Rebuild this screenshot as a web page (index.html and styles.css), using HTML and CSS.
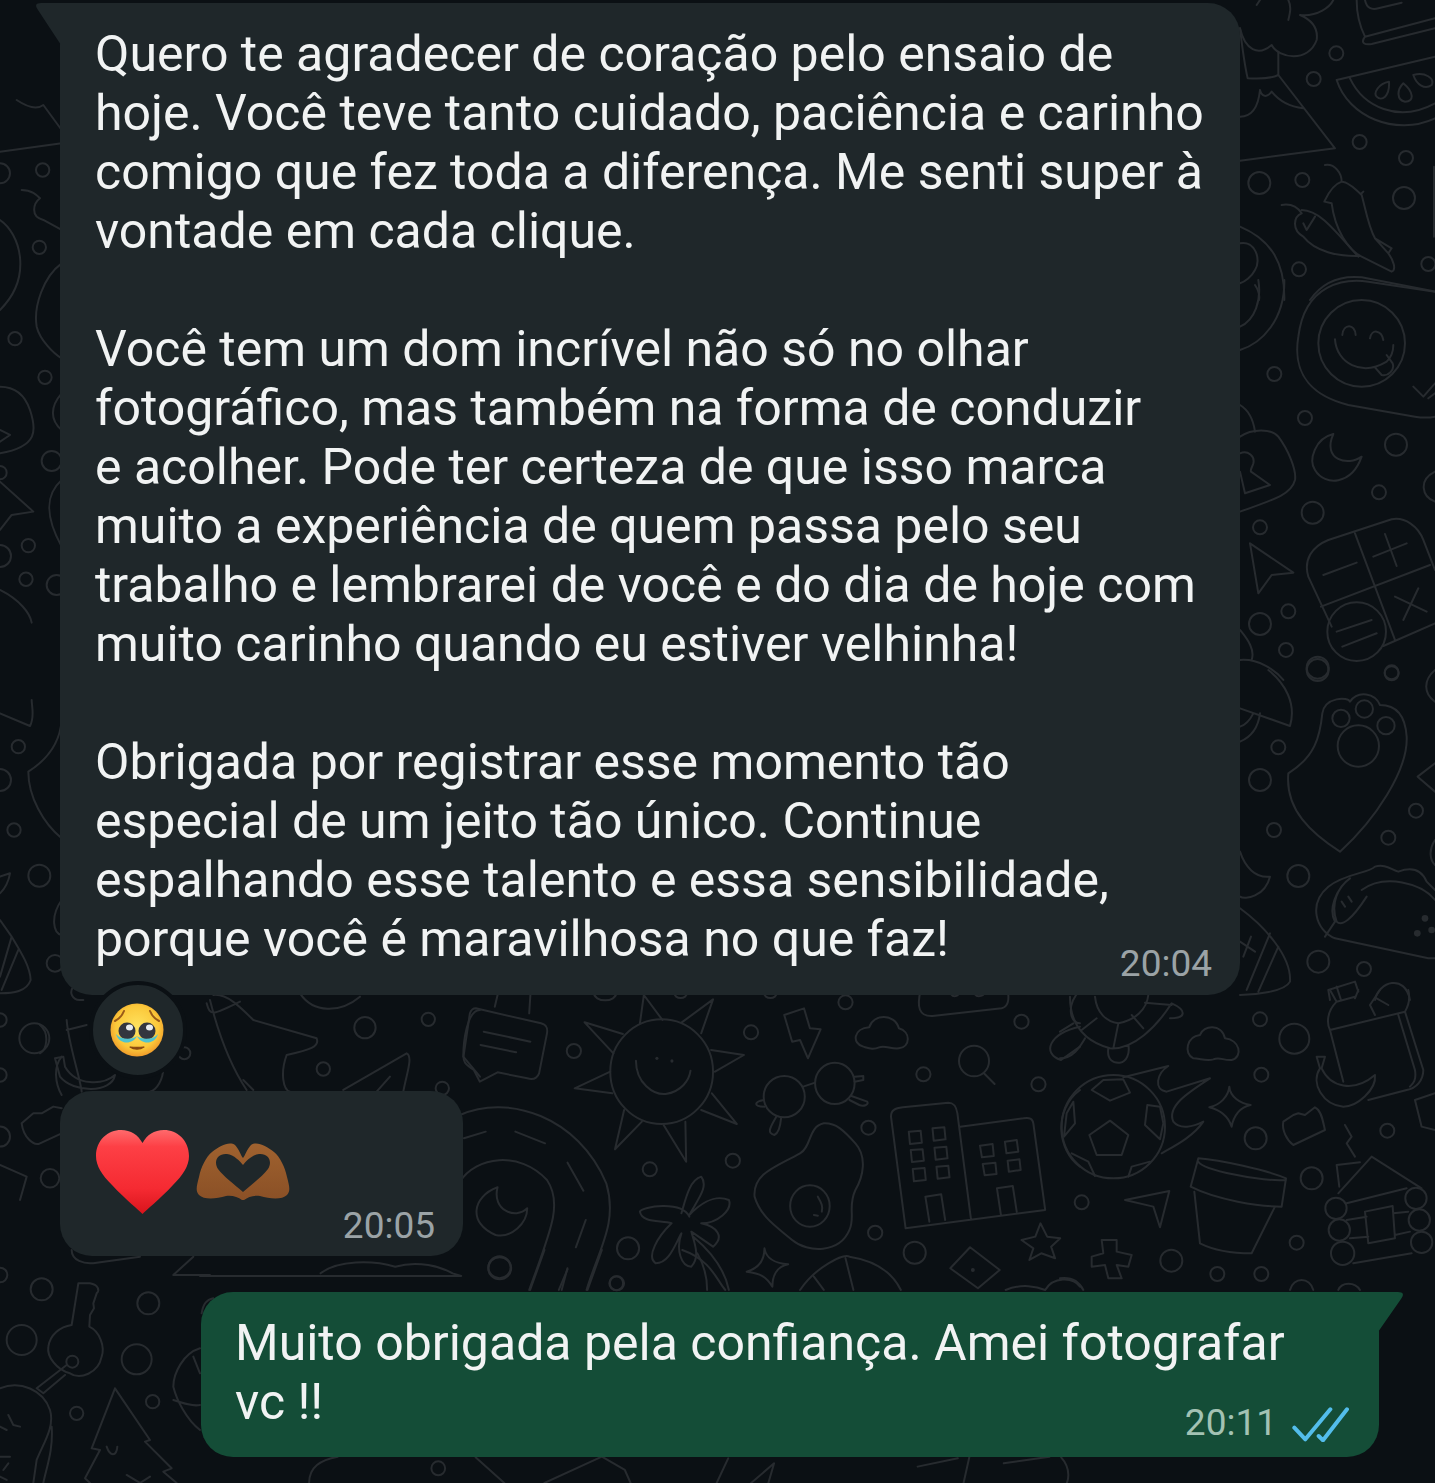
FILE: index.html
```html
<!DOCTYPE html>
<html lang="pt-BR">
<head>
  <meta charset="UTF-8" />
  <meta name="viewport" content="width=device-width, initial-scale=1" />
  <title>Conversa</title>
  <link rel="stylesheet" href="styles.css">
</head>
<body>

<!-- wallpaper doodles, each group is traced in its own scaled coordinates -->
<svg class="wallpaper" width="1435" height="1483" viewBox="0 0 1435 1483" aria-hidden="true">
  <!-- right column, top -->
  <g transform="translate(1235 0) scale(.3333)">
    <path d="M15 85C30 150 70 170 110 135C130 175 220 190 245 120C250 85 230 60 195 45C250 50 285 20 295 0"/>
    <path d="M130 155V225C100 240 60 235 38 235C30 200 25 170 15 85M160 0C170 20 165 40 160 60M65 15L75 0"/>
    <path d="M130 225L300 445L15 482M75 270C80 290 95 295 110 275C130 300 160 320 205 325M75 270C70 320 50 350 15 350"/>
    <path d="M365 0C365 40 375 80 390 110L600 55M390 110C375 130 390 135 410 132L600 85M390 0C395 25 410 30 430 25L500 8"/>
    <path d="M305 240L600 170M305 240C340 350 480 410 600 355M345 235C385 320 490 370 600 310"/>
    <path d="M462 245C430 250 415 280 425 290C440 305 465 290 462 245ZM505 250C485 270 485 300 510 305C540 305 535 275 505 250ZM535 225C545 255 570 270 590 255C600 235 570 215 535 225Z"/>
    <path d="M270 495C300 490 320 520 320 545C290 555 275 590 268 605L290 610C300 690 340 750 380 770L470 815C485 810 475 780 460 760L420 715C400 680 390 620 380 585C345 550 330 545 320 545M380 580L385 575M420 715L470 745L460 760"/>
    <path d="M140 615C170 610 190 625 200 640C175 650 170 690 205 710C240 755 310 770 375 768M200 630C250 630 290 680 370 770M205 670L215 690L240 650"/>
    <path d="M15 680C110 720 150 790 148 900M15 730C60 720 80 780 60 810C50 830 30 845 15 850M60 855C70 870 75 885 72 900M225 900C260 850 310 825 380 832L600 875M597 500V710"/>
    <circle cx="304" cy="160" r="21"/><circle cx="236" cy="237" r="21"/><circle cx="374" cy="426" r="21"/><circle cx="513" cy="474" r="21"/><circle cx="202" cy="540" r="21"/><circle cx="192" cy="808" r="21"/><circle cx="580" cy="792" r="21"/><circle cx="73" cy="549" r="33"/><circle cx="507" cy="594" r="33"/>
  </g>
  <!-- right column, smile, lock, calculator -->
  <g transform="translate(1235 280) scale(.3333)">
    <path d="M600 35L400 5C330-5 210 10 190 170C170 290 240 350 340 375L540 410C570 415 590 412 600 410"/>
    <circle cx="380" cy="190" r="130"/>
    <path d="M300 178C305 250 380 290 455 245C470 230 475 210 475 195M322 165C325 130 360 130 362 165M405 175C410 145 440 150 445 180M420 262L440 285C460 290 480 270 473 250L455 225M535 320L565 350L600 310M580 355L600 340"/>
    <path d="M15 375C40 390 55 420 60 455M15 470C50 445 110 445 130 470C160 510 185 570 180 600C170 640 130 655 15 695M15 520C40 510 60 530 55 550C50 565 45 570 48 575L105 615L30 640L15 575"/>
    <path d="M295 462C240 475 220 540 240 570C270 620 350 615 380 530C340 560 260 540 295 462Z"/>
    <path d="M45 790L175 878L110 885L70 940Z"/>
    <path d="M280 780L470 718C510 710 550 740 565 780L600 870M280 780C230 800 205 840 220 890L290 1040M360 760L480 1080M258 980L585 855M265 885L365 848M415 830L515 790M450 762L485 858M480 950L575 995M550 925L505 1020M305 1055L410 1020M322 1100L425 1060M445 1098L600 1030"/>
    <circle cx="365" cy="1055" r="88"/>
    <path d="M15 210C80 190 150 120 148 0M15 140C60 120 80 60 70 0M15 1050C40 1080 60 1110 50 1140M15 1140C70 1135 120 1170 145 1200M600 575C550 600 560 650 600 665"/>
    <circle cx="118" cy="282" r="21"/><circle cx="210" cy="414" r="21"/><circle cx="432" cy="637" r="21"/><circle cx="75" cy="742" r="21"/><circle cx="160" cy="994" r="21"/><circle cx="153" cy="1110" r="21"/><circle cx="470" cy="1177" r="21"/><circle cx="483" cy="494" r="33"/><circle cx="233" cy="698" r="33"/><circle cx="75" cy="1032" r="33"/><circle cx="248" cy="1163" r="33"/>
  </g>
  <!-- right column, paw and taco -->
  <g transform="translate(1235 670) scale(.3333)">
    <path d="M15 115L165 168C185 100 150 40 100 0M15 215C50 200 70 170 75 130M15 170C30 165 45 150 55 130"/>
    <path d="M160 310C240 260 255 200 262 130C270 80 340 80 345 95C370 60 420 70 435 105C470 105 510 120 515 200C520 300 420 450 315 545C230 490 150 420 160 310Z"/>
    <circle cx="318" cy="145" r="26"/><circle cx="388" cy="117" r="26"/><circle cx="453" cy="167" r="26"/><circle cx="370" cy="228" r="62"/>
    <path d="M600 280L548 320L600 365M15 545C30 590 60 625 105 620C90 680 30 690 15 680"/>
    <path d="M15 715C90 770 170 860 165 935C150 965 60 975 15 975M105 790L35 960M130 830L70 965M15 815L60 845M25 860L48 800"/>
    <path d="M300 805C240 780 220 700 280 650C330 610 400 610 420 590C450 580 470 600 490 605C530 590 560 600 575 635L600 660M300 805L580 865H600M345 625C300 660 280 720 300 755L270 800M395 680C350 750 320 770 305 755C285 700 310 650 345 625M380 660C450 610 560 640 600 690M320 695L330 710M340 680L350 695"/>
    <circle class="dot" cx="570" cy="745" r="10"/><circle class="dot" cx="547" cy="790" r="10"/><circle class="dot" cx="590" cy="780" r="10"/>
    <path d="M285 990L280 960L360 935L370 965M305 950L318 990M420 990C430 935 510 910 525 990M600 510C580 540 585 570 600 585M600 0C565 30 565 70 600 95"/>
    <circle cx="130" cy="232" r="21"/><circle cx="117" cy="480" r="21"/><circle cx="543" cy="422" r="21"/><circle cx="460" cy="503" r="21"/><circle cx="387" cy="897" r="21"/><circle cx="75" cy="330" r="33"/><circle cx="190" cy="618" r="33"/><circle cx="250" cy="875" r="33"/><circle cx="248" cy="0" r="33"/><circle cx="470" cy="10" r="21"/>
  </g>
  <!-- below the long message, right side -->
  <g transform="translate(1060 990) scale(.3333)">
    <path d="M30 20C30 90 60 150 150 175C220 180 290 110 335 40C380 60 380 85 330 85M105 20C110 70 140 95 175 100C225 90 260 60 265 15M175 100L160 175M215 75L250 115M255 38L335 45M65 120L110 85M0 125L40 100M0 205C40 205 60 170 75 145M145 175C140 210 160 220 180 218C200 215 210 190 205 165"/>
    <path d="M400 205C370 190 380 140 420 135C430 105 485 100 495 145C540 150 550 200 515 210C490 212 480 200 460 208C440 215 420 205 400 205Z"/>
    <circle cx="160" cy="410" r="155"/>
    <path d="M150 392L205 435L185 495L110 495L88 435ZM95 300L130 270L190 268L210 308L150 332ZM262 345L300 350L310 400L300 448L255 405ZM40 335L20 370L12 440L45 400ZM35 490L85 515L105 558M205 560L215 530L270 515"/>
    <path d="M190 262L325 228C290 250 280 300 320 305L450 265C380 310 320 350 340 395C360 420 400 410 430 395C400 440 340 470 305 490"/>
    <path d="M508 290C510 320 540 340 572 345C540 350 520 380 515 410C505 380 480 360 448 352C480 345 505 320 508 290Z"/>
    <path d="M415 505C480 510 620 540 678 565L665 650C600 650 470 630 392 590ZM415 515C430 540 600 575 678 570M403 605L420 760C470 785 530 790 575 790L645 650"/>
    <path d="M195 630L328 603L300 712L280 650Z"/>
    <path d="M125 750H170V785L215 795L205 830L170 825L185 865H145L135 825L95 830V800L130 790Z"/>
    <path d="M810 120L1035 65L1090 240C1090 270 1070 295 1040 300L925 330M810 120C800 100 800 65 830 35L810 0M1035 65C1050 40 1050 20 1045 0M810 120L850 275M1015 75L1065 240C1070 270 1060 280 1050 290M885 25L895 0M830 35L885 20M945 75L930 45L960 0M950 25L985 45"/>
    <path d="M770 200H795L785 235C810 290 880 310 945 255C950 300 890 350 850 350C790 345 750 280 780 235Z"/>
    <path d="M670 395L700 375L715 370L735 375L765 352C785 360 790 400 795 420L700 465C680 450 665 420 670 395Z"/>
    <path d="M855 405L875 440L860 460L885 500M835 610L935 500L1085 595M830 525L900 517M830 525L838 590M860 640L1040 595M860 690L920 680M1000 670L1045 665M870 745L925 740M1005 735L1050 725M880 820L1055 790M915 665L998 648L1005 745L925 760Z"/>
    <circle cx="828" cy="655" r="32"/><circle cx="1068" cy="625" r="32"/><circle cx="838" cy="720" r="32"/><circle cx="1078" cy="690" r="32"/><circle cx="848" cy="790" r="35"/><circle cx="1085" cy="757" r="32"/>
    <path d="M1125 310L1065 330L1085 410L1125 420M690 900C700 860 750 860 760 900M835 900C845 875 885 875 900 900M0 865C40 860 60 880 70 900"/>
    <circle cx="600" cy="88" r="21"/><circle cx="604" cy="254" r="21"/><circle cx="65" cy="637" r="21"/><circle cx="710" cy="758" r="21"/><circle cx="472" cy="852" r="21"/><circle cx="604" cy="852" r="21"/><circle cx="982" cy="422" r="21"/><circle cx="703" cy="146" r="45"/><circle cx="587" cy="445" r="33"/><circle cx="755" cy="565" r="33"/><circle cx="334" cy="812" r="33"/>
  </g>
  <!-- sun, glasses, egg, buildings -->
  <g transform="translate(460 990) scale(.3954 .3333)">
    <path d="M40 55L205 100C220 105 222 115 220 130L200 250C195 265 185 270 170 265L95 247L50 275L35 240C15 225 5 215 10 190L25 70C28 60 32 55 40 55ZM60 125L178 155M52 165L142 187M88 50L95 15M175 70L178 15"/>
    <ellipse cx="510" cy="245" rx="130" ry="157"/>
    <path d="M455 100L465 15L512 90M560 98L640 28L610 130M635 180L718 195L645 245M637 310L700 402L610 360M570 395L572 515L515 405M460 395L392 478L415 360M385 310L290 295L380 245M388 190L315 97L412 132"/>
    <path d="M445 212C445 280 490 315 520 312C560 305 580 270 583 242"/>
    <ellipse class="dot" cx="498" cy="205" rx="4" ry="5"/><ellipse class="dot" cx="536" cy="213" rx="4" ry="5"/>
    <path d="M820 75L870 55L885 115L912 118L880 205L860 150L840 155ZM1020 170C990 160 995 115 1035 112C1045 70 1100 70 1110 115C1140 125 1140 170 1110 175C1090 178 1075 165 1060 172C1045 180 1035 175 1020 170Z"/>
    <ellipse cx="820" cy="320" rx="52" ry="62"/><ellipse cx="948" cy="280" rx="50" ry="62"/>
    <path d="M868 290L898 278M768 330C745 335 740 350 770 350M800 380C785 410 775 430 795 435C805 430 810 410 812 385M998 260L1020 258V270L998 275M990 318L1030 335C1035 345 1020 350 1010 345L985 330"/>
    <path d="M920 400C880 410 890 470 860 490C800 530 740 550 745 620C760 680 800 710 840 750C880 790 960 790 985 720C1000 680 980 650 1000 600C1020 560 1030 500 1000 460C970 420 950 398 920 400Z"/>
    <ellipse cx="885" cy="648" rx="50" ry="62"/>
    <path d="M905 620C915 640 918 650 915 665M895 675L905 677"/>
    <path d="M1127 715L1090 380C1090 360 1100 355 1120 352L1235 338C1250 338 1255 350 1258 370L1292 685M1127 715L1480 660L1450 400C1448 385 1440 382 1425 385L1265 410M1135 425L1165 422L1168 458L1138 462ZM1195 415L1225 412L1228 448L1198 452ZM1140 480L1170 478L1173 512L1143 516ZM1200 473L1230 470L1233 505L1203 509ZM1145 537L1175 534L1178 570L1148 574ZM1205 530L1235 527L1238 562L1208 566ZM1315 467L1347 462L1350 498L1320 502ZM1378 455L1408 450L1412 485L1382 490ZM1322 522L1354 518L1357 552L1327 556ZM1385 512L1415 508L1418 540L1388 545ZM1187 695L1177 620L1217 613L1227 690M1368 675L1358 595L1398 588L1408 665"/>
    <path d="M1165 0C1155 50 1160 80 1195 78L1370 55C1385 50 1390 30 1385 0M1240 0C1240 25 1260 25 1265 0M1300 0C1300 25 1320 25 1335 0"/>
    <ellipse cx="1300" cy="213" rx="38" ry="46"/>
    <path d="M1325 250L1352 282M1568 300C1500 360 1510 480 1568 530M1568 0C1530 50 1545 100 1568 100M1568 110C1490 130 1470 190 1520 210L1568 170"/>
    <path d="M0 375C120 310 300 380 370 580C400 700 350 780 320 900M0 575C40 500 150 480 220 570C260 640 230 720 175 900M10 445L65 425M140 425L215 460M272 518L312 602M318 690L293 772M272 838L250 900M95 592C30 620 20 700 90 735C130 745 170 700 170 655C140 690 80 660 95 592Z"/>
    <path d="M580 680C560 630 460 650 455 665C460 700 510 690 535 700C500 740 470 800 495 820C530 820 545 760 560 730C545 780 560 830 585 830C610 800 590 750 585 725L640 770C670 740 650 710 610 700C650 700 690 660 680 630C640 610 600 650 580 675C600 630 630 590 610 560C580 570 570 630 560 670M590 740C640 790 670 840 680 900M600 790C620 830 625 870 625 900"/>
    <path d="M770 775C775 810 800 820 830 823C800 830 790 860 790 890C775 860 760 850 725 845C755 835 770 810 770 775Z"/>
    <path d="M1290 772L1365 840L1310 895L1240 835ZM1468 700L1485 740L1518 745L1495 770L1505 805L1470 790L1440 810L1450 775L1420 750L1455 740ZM860 900C900 830 970 790 985 800C1040 810 1090 840 1115 900M975 805L995 900M895 860L920 900M1380 900C1420 880 1460 890 1480 900C1500 860 1550 860 1568 890"/>
    <ellipse class="dot" cx="1297" cy="840" rx="5" ry="6"/>
    <ellipse cx="288" cy="183" rx="18" ry="21"/><ellipse cx="736" cy="127" rx="18" ry="21"/><ellipse cx="975" cy="37" rx="18" ry="21"/><ellipse cx="1172" cy="253" rx="18" ry="21"/><ellipse cx="1420" cy="95" rx="18" ry="21"/><ellipse cx="1463" cy="283" rx="18" ry="21"/><ellipse cx="1033" cy="413" rx="18" ry="21"/><ellipse cx="690" cy="512" rx="18" ry="21"/><ellipse cx="480" cy="538" rx="18" ry="21"/><ellipse cx="1050" cy="728" rx="18" ry="21"/><ellipse cx="397" cy="880" rx="18" ry="21"/><ellipse cx="425" cy="775" rx="28" ry="33"/><ellipse cx="100" cy="832" rx="28" ry="33"/><ellipse cx="1150" cy="788" rx="28" ry="33"/><ellipse cx="367" cy="10" rx="28" ry="21"/><ellipse cx="558" cy="10" rx="16" ry="14"/><ellipse cx="785" cy="10" rx="16" ry="14"/>
  </g>
  <!-- under the reaction, rocket and plane -->
  <g transform="translate(40 960) scale(.3333)">
    <path d="M510 120C530 200 560 300 620 390M520 105C560 100 600 140 640 180L830 235C840 260 810 270 740 285C720 340 730 390 750 395M500 130C510 170 520 165 600 125M610 360L640 390"/>
    <path d="M910 390L1100 280C1120 290 1100 340 1090 395M1050 350L1010 395M1320 150C1280 150 1270 250 1270 290L1320 350"/>
    <circle cx="975" cy="203" r="32"/><circle cx="1165" cy="178" r="20"/><circle cx="850" cy="327" r="20"/><circle cx="1207" cy="385" r="20"/><circle cx="433" cy="280" r="18"/>
    <path d="M100 80C85 100 100 120 118 120H130M80 180C85 250 120 350 125 395M80 210L140 195M45 295L70 290L75 320C110 380 190 375 225 345C215 400 100 400 60 350ZM0 195C30 220 20 270 0 280M370 320C370 360 350 390 330 395M780 100C820 160 900 160 960 110"/>
  </g>
  <!-- left column -->
  <g transform="translate(0 100) scale(.3333)">
    <path d="M50 0C80 20 110 30 130 15L185 90M0 155L185 130M65 270C95 270 110 285 120 295C100 310 90 350 130 360L185 390M0 360C60 400 100 530 0 630M185 490C130 530 100 620 110 680C120 720 160 760 185 775M0 860C60 860 80 900 90 930C110 990 115 1040 0 1060M0 990L30 1005L0 1025M0 1145L100 1235L35 1245L0 1290M0 1470C60 1500 90 1540 95 1568M185 880C150 920 150 960 185 990M185 1140C140 1180 130 1240 185 1340"/>
    <circle cx="0" cy="220" r="30"/><circle cx="128" cy="210" r="20"/><circle cx="118" cy="442" r="20"/><circle cx="45" cy="716" r="20"/><circle cx="135" cy="832" r="20"/><circle cx="0" cy="1118" r="20"/><circle cx="85" cy="1337" r="20"/><circle cx="78" cy="1438" r="20"/><circle cx="0" cy="1368" r="33"/><circle cx="155" cy="1083" r="30"/><circle cx="170" cy="1455" r="30"/>
  </g>
  <g transform="translate(0 700) scale(.3333)">
    <path d="M0 40L90 78C105 50 95 20 95 0M185 60C180 130 140 180 85 215C85 290 130 370 185 415M0 530L30 520C25 550 10 570 0 580M0 660L35 710C65 760 90 800 92 840C80 875 40 880 0 880M35 710L0 830M55 750L5 870M185 600C150 650 160 700 185 705M185 1070C160 1100 165 1150 185 1185M65 1270L100 1240H125L160 1220L185 1225M65 1270C70 1310 100 1340 120 1330L185 1300M0 1395L80 1430L60 1500"/>
    <circle cx="55" cy="140" r="20"/><circle cx="0" cy="240" r="33"/><circle cx="42" cy="390" r="20"/><circle cx="118" cy="527" r="33"/><circle cx="0" cy="960" r="20"/><circle cx="0" cy="1125" r="20"/><circle cx="103" cy="1015" r="45"/><circle cx="0" cy="1310" r="30"/><circle cx="150" cy="1435" r="28"/><circle cx="165" cy="790" r="25"/>
  </g>
  <!-- bottom left, key and tree -->
  <g transform="translate(0 1250) scale(.3333)">
    <path d="M235 100H270C295 105 300 120 290 130L280 160L282 175L270 195L268 230C300 245 315 290 305 320C295 370 240 390 210 370C170 360 140 320 145 290C150 255 180 230 215 225Z"/>
    <circle cx="217" cy="335" r="18"/>
    <path d="M200 345L110 415L130 430L195 375M0 415C60 390 130 420 150 480C165 530 130 580 110 630L100 699M155 530C160 600 140 650 130 699M0 530L20 540M25 495L40 525L60 530M0 620H30M10 660L25 640M0 680L20 690"/>
    <path d="M345 415L450 570L435 575L515 655L490 665L530 699M345 415L275 595L300 600L255 685L270 699M320 590C330 620 350 620 352 590M380 675L420 699L450 680"/>
    <path d="M600 295C550 310 520 370 520 410C530 450 560 510 600 540M520 450C550 460 580 470 600 465M580 320L600 370M605 190C610 160 620 150 640 145M215 0C215 30 250 45 290 38L420 20M580 20L520 75H630"/>
    <circle cx="125" cy="118" r="33"/><circle cx="65" cy="270" r="45"/><circle cx="445" cy="160" r="33"/><circle cx="410" cy="328" r="45"/><circle cx="230" cy="490" r="20"/><circle cx="458" cy="455" r="20"/><circle cx="0" cy="75" r="22"/>
  </g>
  <!-- strip above and below the green bubble -->
  <g transform="translate(200 1250) scale(.5741 .3333)">
    <path d="M210 70C240 30 300 30 340 50C380 30 420 50 440 70L455 78H0M575 120L600 0M630 120L640 55M675 120L700 0M840 0C890 30 900 90 915 120M190 699C190 650 210 630 240 620M480 622L530 699M600 699L700 620L740 660L750 699M900 699L920 625M960 699L1000 640L990 699M1250 650L1320 625M1400 640L1480 620M1330 699L1340 622M1500 622C1520 660 1510 699 1510 699"/>
    <ellipse cx="522" cy="55" rx="20" ry="33"/><ellipse cx="725" cy="100" rx="12" ry="21"/><ellipse cx="415" cy="655" rx="12" ry="21"/>
  </g>
</svg>

<main class="chat">
  <div class="bubble incoming tail-left long">
    <p class="msg-text">Quero te agradecer de coração pelo ensaio de<br>hoje. Você teve tanto cuidado, paciência e carinho<br>comigo que fez toda a diferença. Me senti super à<br>vontade em cada clique.<br><br>Você tem um dom incrível não só no olhar<br>fotográfico, mas também na forma de conduzir<br>e acolher. Pode ter certeza de que isso marca<br>muito a experiência de quem passa pelo seu<br>trabalho e lembrarei de você e do dia de hoje com<br>muito carinho quando eu estiver velhinha!<br><br>Obrigada por registrar esse momento tão<br>especial de um jeito tão único. Continue<br>espalhando esse talento e essa sensibilidade,<br>porque você é maravilhosa no que faz!</p>
    <div class="meta"><span class="time">20:04</span></div>
  </div>

  <div class="reaction">
    <svg width="54" height="54" viewBox="0 0 54 54" aria-label="rosto suplicante">
      <defs>
        <radialGradient id="face" cx="50%" cy="45%" r="58%">
          <stop offset="0" stop-color="#ffe35f"/>
          <stop offset=".7" stop-color="#fbc83a"/>
          <stop offset="1" stop-color="#ee9327"/>
        </radialGradient>
      </defs>
      <circle cx="27" cy="27" r="26.500" fill="url(#face)"/>
      <path d="M5 18C9 16 12 13 14 8" fill="none" stroke="#9a5a18" stroke-width="2" stroke-linecap="round"/>
      <path d="M49 18C45 16 42 13 40 8" fill="none" stroke="#9a5a18" stroke-width="2" stroke-linecap="round"/>
      <circle cx="17" cy="28" r="8.500" fill="#33363f"/>
      <circle cx="37" cy="28" r="8.500" fill="#33363f"/>
      <ellipse cx="19.500" cy="24.500" rx="3.500" ry="3" fill="#e8ecf0"/>
      <ellipse cx="39.500" cy="24.500" rx="3.500" ry="3" fill="#e8ecf0"/>
      <path d="M6 31C9 42 23 42 27 33C22 37 11 37 6 31Z" fill="#4fc3d0"/>
      <path d="M27 33C31 42 45 42 48 31C43 37 32 37 27 33Z" fill="#4fc3d0"/>
      <path d="M20 44C24 47 30 47 34 44C30 44.500 24 44.500 20 44Z" fill="#8a4a12" stroke="#8a4a12" stroke-width="1.200" stroke-linejoin="round"/>
    </svg>
  </div>

  <div class="bubble incoming short">
    <div class="emoji-row">
      <svg class="heart" width="93" height="84" viewBox="0 0 93 84" aria-label="coração vermelho">
        <defs>
          <linearGradient id="heartFill" x1="0" y1="0" x2="0" y2="1">
            <stop offset="0" stop-color="#ff6a6c"/>
            <stop offset=".2" stop-color="#fd3f45"/>
            <stop offset=".7" stop-color="#f52a32"/>
            <stop offset="1" stop-color="#d9141c"/>
          </linearGradient>
        </defs>
        <path d="M46.500 84C43 80 30 70 16 55C6 45 0 36 0 26C0 10 12 0 25 0C35 0 42 5 46.500 13C51 5 58 0 68 0C81 0 93 10 93 26C93 36 87 45 77 55C63 70 50 80 46.500 84Z" fill="url(#heartFill)"/>
      </svg>
      <svg class="hands" width="94" height="58" viewBox="0 0 94 58" aria-label="mãos formando coração">
        <defs>
          <linearGradient id="handFill" x1="0" y1="0" x2="0" y2="1">
            <stop offset="0" stop-color="#a0622f"/>
            <stop offset="1" stop-color="#8a5026"/>
          </linearGradient>
        </defs>
        <path fill="url(#handFill)" fill-rule="evenodd" d="M46 57C42 54 36 52 30 53C20 56 8 57 3 52C-1 48 1 42 3 34C5 24 10 14 16 9C24 3 33-2 39 2C43 6 45 13 47 15C49 13 51 6 55 2C61-2 70 3 78 9C84 14 89 24 91 34C93 42 95 48 91 52C86 57 74 56 64 53C58 52 52 54 48 57ZM47 49C38 41 28 34 22 26C17 18 22 10 31 11C38 12 44 18 47 22C50 18 56 12 63 11C72 10 77 18 72 26C66 34 56 41 47 49Z"/>
      </svg>
    </div>
    <div class="meta"><span class="time">20:05</span></div>
  </div>

  <div class="bubble outgoing tail-right">
    <p class="msg-text">Muito obrigada pela confiança. Amei fotografar<br>vc !!</p>
    <div class="meta">
      <span class="time">20:11</span>
      <svg class="ticks" width="58" height="37" viewBox="572 362 174 111" aria-label="lida">
        <path d="M582 430L615 465L690 375M655 455L668 468L740 375" fill="none" stroke="#53bdeb" stroke-width="12" stroke-linecap="round" stroke-linejoin="round"/>
      </svg>
    </div>
  </div>
</main>

</body>
</html>
```

FILE: styles.css
```css
body {
  margin: 0;
  width: 1435px;
  height: 1483px;
  overflow: hidden;
  position: relative;
  background-color: #0b1014;
  color: #f1f3f3;
  font-family: 'Roboto', 'Liberation Sans', sans-serif;
}

/* wallpaper sits behind the chat */
.wallpaper {
  position: absolute;
  top: 0;
  left: 0;
}
.wallpaper path,
.wallpaper circle,
.wallpaper ellipse {
  fill: none;
  stroke: #272b2f;
  stroke-width: 2px;
  stroke-linecap: round;
  stroke-linejoin: round;
  vector-effect: non-scaling-stroke;
}
.wallpaper .dot {
  fill: #272b2f;
  stroke: none;
}

.chat {
  position: relative;
  display: flex;
  flex-direction: column;
  align-items: flex-start;
  padding: 3px 0 0 60px;
}

.bubble {
  position: relative;
  box-sizing: border-box;
  border-radius: 32px;
}
.incoming {
  background-color: #1f272a;
}
.outgoing {
  background-color: #144d37;
  width: 1178px;
  margin: 36px 0 0 141px;
  padding: 22px 30px 12px 34px;
}
.long {
  width: 1180px;
  padding: 22px 28px 9px 35px;
}
.short {
  width: 403px;
  height: 165px;
  margin-top: 12px;
  padding: 39px 28px 0 36px;
}

/* bubble tails */
.tail-left {
  border-top-left-radius: 0;
}
.tail-left::before {
  content: "";
  position: absolute;
  top: 0;
  left: -25px;
  width: 26px;
  height: 42px;
  background-color: #1f272a;
  clip-path: path("M26 0H6Q-2 0 3 7L26 42Z");
}
.tail-right {
  border-top-right-radius: 0;
}
.tail-right::before {
  content: "";
  position: absolute;
  top: 0;
  right: -25px;
  width: 26px;
  height: 40px;
  background-color: #144d37;
  clip-path: path("M0 0H20Q28 0 23 7L0 40Z");
}

.msg-text {
  margin: 0;
  font-size: 50px;
  line-height: 59px;
  font-weight: 400;
}

.meta {
  display: flex;
  justify-content: flex-end;
  align-items: center;
  gap: 14px;
  height: 44px;
  margin-top: -27px;
}
.time {
  font-size: 37px;
  line-height: 44px;
  color: #9ba3a6;
}
.outgoing .meta {
  margin-top: -31px;
}
.outgoing .time {
  color: #a3c2b3;
}
.short .meta {
  margin-top: -10px;
}

.reaction {
  box-sizing: border-box;
  width: 98px;
  height: 98px;
  margin: -14px 0 0 29px;
  display: flex;
  align-items: center;
  justify-content: center;
  border: 4px solid #0b1014;
  border-radius: 50%;
  background-color: #1f272a;
  position: relative;
}
.reaction svg {
  margin-right: 3px;
}

.emoji-row {
  display: flex;
  align-items: center;
  gap: 7px;
}
.ticks {
  flex-shrink: 0;
}
```
